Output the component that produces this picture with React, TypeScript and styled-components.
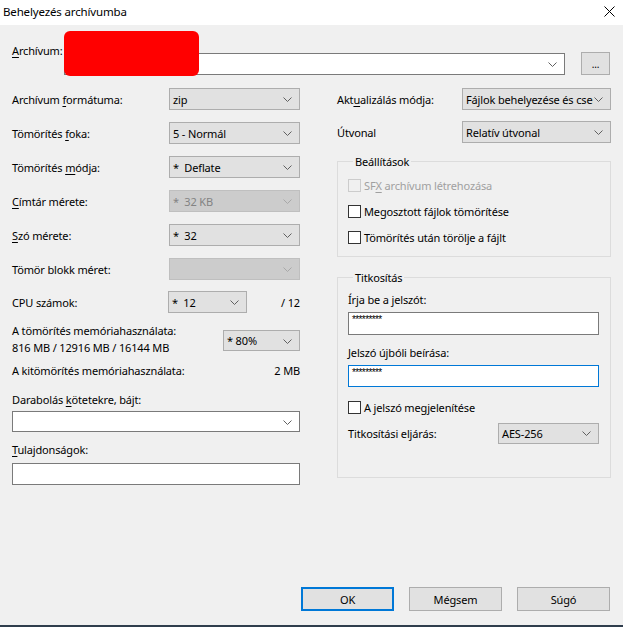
import { ReactNode } from "react"
import styled, { createGlobalStyle } from "styled-components"

const GlobalStyle = createGlobalStyle`
  html, body {
    margin: 0;
    padding: 0;
    background: #f0f0f0;
  }
  body {
    font-family: "Noto Sans", "Open Sans", sans-serif;
    font-size: 11px;
    letter-spacing: -0.15px;
    color: #000;
  }
`

const Window = styled.div`
  width: 623px;
  height: 627px;
  display: flex;
  flex-direction: column;
  background: #f0f0f0;
  overflow: hidden;
`

const TitleBar = styled.div`
  height: 25px;
  background: #fff;
  display: flex;
  align-items: center;
  justify-content: space-between;
  padding: 0 8px 2px 3px;
  box-sizing: border-box;
  font-size: 11.5px;
`

const Body = styled.div`
  flex: 1;
  padding: 0 12px;
  display: flex;
  flex-direction: column;
`

const BottomEdge = styled.div`
  height: 2px;
  background: #2f3d4c;
`

const ArchiveRow = styled.div`
  position: relative;
  height: 50px;
  display: flex;
  align-items: flex-start;
`

const ArchiveLabel = styled.span`
  width: 52px;
  margin-top: 18px;
  line-height: 15px;
`

const Redaction = styled.div`
  position: absolute;
  left: 52px;
  top: 6px;
  width: 135px;
  height: 45px;
  border-radius: 6px;
  background: #ff0000;
`

const BrowseButton = styled.div`
  margin-top: 27px;
  margin-left: 16px;
  width: 29px;
  height: 23px;
  box-sizing: border-box;
  background: #e1e1e1;
  border: 1px solid #adadad;
  display: flex;
  align-items: flex-end;
  justify-content: center;
  padding-bottom: 5px;
  line-height: 10px;
  font-size: 10px;
`

const Columns = styled.div`
  margin-top: 13px;
  display: grid;
  grid-template-columns: 288px 274px;
  column-gap: 37px;
`

const Column = styled.div`
  display: flex;
  flex-direction: column;
`

const FieldRow = styled.div<{ $gap?: number, $auto?: boolean }>`
  height: ${({ $auto }) => ($auto ? "auto" : "22px")};
  display: flex;
  align-items: ${({ $auto }) => ($auto ? "flex-start" : "center")};
  margin-bottom: ${({ $gap }) => ($gap ?? 12)}px;
`

const Label = styled.span<{ $width?: number }>`
  line-height: 15px;
  white-space: nowrap;
  ${({ $width }) => ($width ? `width: ${$width}px; flex: none;` : "flex: 1;")}
`

const Text = styled.div<{ $top?: number, $align?: string, $line?: number }>`
  line-height: ${({ $line }) => $line ?? 15}px;
  margin-top: ${({ $top }) => $top ?? 0}px;
  text-align: ${({ $align }) => $align ?? "left"};
  white-space: nowrap;
`

const U = styled.span`
  text-decoration: underline;
  text-underline-offset: 2px;
`

type ComboKind = "grey" | "white" | "disabled"

const comboBg = { grey: "#e1e1e1", white: "#ffffff", disabled: "#cccccc" }
const comboBorder = { grey: "#adadad", white: "#7a7a7a", disabled: "#bfbfbf" }

const ComboBox = styled.div<{ $kind: ComboKind, $width?: number, $height?: number, $top?: number }>`
  position: relative;
  flex: none;
  box-sizing: border-box;
  width: ${({ $width }) => ($width ? `${$width}px` : "100%")};
  height: ${({ $height }) => $height ?? 22}px;
  margin-top: ${({ $top }) => $top ?? 0}px;
  background: ${({ $kind }) => comboBg[$kind]};
  border: 1px solid ${({ $kind }) => comboBorder[$kind]};
  color: ${({ $kind }) => ($kind === "disabled" ? "#838383" : "#000")};
  display: flex;
  align-items: center;
  padding: 0 18px 0 3px;
  white-space: nowrap;
  overflow: hidden;
  line-height: 15px;
`

const Chevron = styled.svg<{ $disabled?: boolean }>`
  position: absolute;
  right: 7px;
  top: 50%;
  margin-top: -2px;
  width: 9px;
  height: 5px;
  stroke: ${({ $disabled }) => ($disabled ? "#a8a8a8" : "#606060")};
  fill: none;
`

const ChevronMask = styled.span<{ $kind: ComboKind }>`
  position: absolute;
  right: 0;
  top: 0;
  bottom: 0;
  width: 17px;
  background: ${({ $kind }) => comboBg[$kind]};
`

const Combo = ({ kind = "grey", width, height, top, children }: {
  kind?: ComboKind
  width?: number
  height?: number
  top?: number
  children?: ReactNode
}) => (
  <ComboBox $kind={kind} $width={width} $height={height} $top={top}>
    {children}
    <ChevronMask $kind={kind} />
    <Chevron viewBox="0 0 9 5" $disabled={kind === "disabled"}>
      <path d="M0.5 0.5 L4.5 4.5 L8.5 0.5" strokeWidth="1" />
    </Chevron>
  </ComboBox>
)

const TextInput = styled.div<{ $focused?: boolean, $top?: number, $height?: number }>`
  box-sizing: border-box;
  width: 100%;
  height: ${({ $height }) => $height ?? 22}px;
  margin-top: ${({ $top }) => $top ?? 0}px;
  background: #fff;
  border: 1px solid ${({ $focused }) => ($focused ? "#0078d7" : "#7a7a7a")};
  padding: 2px 3px 0;
  font-family: "Liberation Sans", sans-serif;
  font-size: 10px;
  line-height: 10px;
  letter-spacing: -0.6px;
`

const Group = styled.fieldset<{ $top: number, $padding: string }>`
  margin: ${({ $top }) => $top}px 0 0;
  padding: ${({ $padding }) => $padding};
  min-width: 0;
  border: 1px solid #dcdcdc;
  display: flex;
  flex-direction: column;
`

const Legend = styled.legend`
  padding: 0 2px;
  margin-left: 5px;
  line-height: 15px;
`

const CheckRow = styled.div<{ $disabled?: boolean, $gap?: number, $top?: number }>`
  height: 16px;
  display: flex;
  align-items: center;
  gap: 3px;
  margin-top: ${({ $top }) => $top ?? 0}px;
  margin-bottom: ${({ $gap }) => $gap ?? 0}px;
  color: ${({ $disabled }) => ($disabled ? "#a0a0a0" : "#000")};
  line-height: 15px;
`

const CheckBox = styled.span<{ $disabled?: boolean }>`
  width: 13px;
  height: 13px;
  box-sizing: border-box;
  background: ${({ $disabled }) => ($disabled ? "#f0f0f0" : "#fff")};
  border: 1px solid ${({ $disabled }) => ($disabled ? "#cccccc" : "#333333")};
`

const Footer = styled.div`
  margin-top: auto;
  margin-bottom: 14px;
  margin-right: 1px;
  display: flex;
  justify-content: flex-end;
  gap: 15px;
`

const Button = styled.div<{ $default?: boolean }>`
  width: 93px;
  height: 24px;
  box-sizing: border-box;
  background: #e1e1e1;
  border: ${({ $default }) => ($default ? "2px solid #0078d7" : "1px solid #adadad")};
  display: flex;
  align-items: center;
  justify-content: center;
`

const CloseIcon = () => (
  <svg width="11" height="11" viewBox="0 0 11 11" stroke="#000" strokeWidth="1">
    <path d="M0.5 0.5 L10.5 10.5 M10.5 0.5 L0.5 10.5" />
  </svg>
)

const App = () => (
  <>
    <GlobalStyle />
    <Window>
      <TitleBar>
        <span>Behelyezés archívumba</span>
        <CloseIcon />
      </TitleBar>
      <Body>
        <ArchiveRow>
          <ArchiveLabel><U>A</U>rchívum:</ArchiveLabel>
          <Combo kind="white" width={501} top={28} />
          <BrowseButton>...</BrowseButton>
          <Redaction />
        </ArchiveRow>

        <Columns>
          <Column>
            <FieldRow>
              <Label>Archívum <U>f</U>ormátuma:</Label>
              <Combo width={131}>zip</Combo>
            </FieldRow>
            <FieldRow>
              <Label>Tömörítés <U>f</U>oka:</Label>
              <Combo width={131}>5 - Normál</Combo>
            </FieldRow>
            <FieldRow>
              <Label>Tömörítés <U>m</U>ódja:</Label>
              <Combo width={131}>*&nbsp; Deflate</Combo>
            </FieldRow>
            <FieldRow>
              <Label><U>C</U>ímtár mérete:</Label>
              <Combo kind="disabled" width={131}>*&nbsp; 32 KB</Combo>
            </FieldRow>
            <FieldRow>
              <Label><U>S</U>zó mérete:</Label>
              <Combo width={131}>*&nbsp; 32</Combo>
            </FieldRow>
            <FieldRow $gap={11}>
              <Label>Tömör blokk méret:</Label>
              <Combo kind="disabled" width={131} />
            </FieldRow>
            <FieldRow $gap={0}>
              <Label $width={156}>CPU számok:</Label>
              <Combo width={79}>*&nbsp; 12</Combo>
              <Label>
                <Text $align="right">/ 12</Text>
              </Label>
            </FieldRow>

            <FieldRow $auto $gap={0}>
              <Label>
                <Text $top={9} $line={17}>A tömörítés memóriahasználata:</Text>
                <Text $line={17}>816 MB / 12916 MB / 16144 MB</Text>
              </Label>
              <Combo width={77} height={21} top={17}>* 80%</Combo>
            </FieldRow>
            <FieldRow $auto $gap={0}>
              <Label>
                <Text $top={7}>A kitömörítés memóriahasználata:</Text>
              </Label>
              <Text $top={7}>2 MB</Text>
            </FieldRow>
            <Text $top={14}>Darabolás <U>k</U>ötetekre, bájt:</Text>
            <Combo kind="white" height={21} top={4} />
            <Text $top={10}><U>T</U>ulajdonságok:</Text>
            <TextInput $top={6} />
          </Column>

          <Column>
            <FieldRow $gap={11}>
              <Label>Akt<U>u</U>alizálás módja:</Label>
              <Combo width={149}>Fájlok behelyezése és cserélése</Combo>
            </FieldRow>
            <FieldRow $gap={0}>
              <Label>Útvonal</Label>
              <Combo width={149}>Relatív útvonal</Combo>
            </FieldRow>

            <Group $top={11} $padding="8px 10px 11px">
              <Legend>Beállítások</Legend>
              <CheckRow $disabled $gap={10}>
                <CheckBox $disabled />
                <span>SF<U>X</U> archívum létrehozása</span>
              </CheckRow>
              <CheckRow $gap={10}>
                <CheckBox />
                <span>Megosztott fájlok tömörítése</span>
              </CheckRow>
              <CheckRow>
                <CheckBox />
                <span>Tömörítés után törölje a fájlt</span>
              </CheckRow>
            </Group>

            <Group $top={13} $padding="7px 11px 33px 10px">
              <Legend>Titkosítás</Legend>
              <Text>Írja be a jelszót:</Text>
              <TextInput $top={5} $height={23}>*********</TextInput>
              <Text $top={10}>Jelszó újbóli beírása:</Text>
              <TextInput $top={5} $focused>*********</TextInput>
              <CheckRow $top={12} $gap={7}>
                <CheckBox />
                <span>A jelszó megjelenítése</span>
              </CheckRow>
              <FieldRow $gap={0}>
                <Label>Titkosítási eljárás:</Label>
                <Combo width={101} height={21}>AES-256</Combo>
              </FieldRow>
            </Group>
          </Column>
        </Columns>

        <Footer>
          <Button $default>OK</Button>
          <Button>Mégsem</Button>
          <Button>Súgó</Button>
        </Footer>
      </Body>
      <BottomEdge />
    </Window>
  </>
)

export default App
